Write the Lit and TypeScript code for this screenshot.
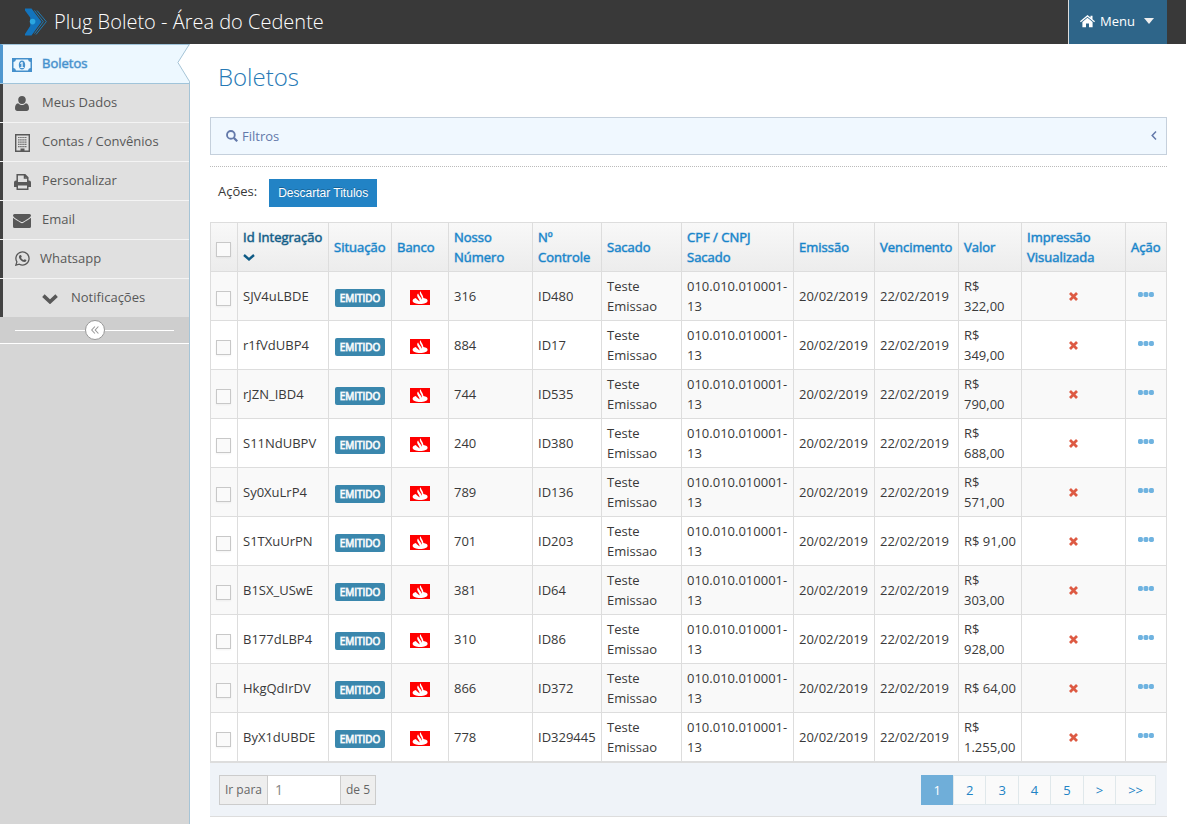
import { LitElement, html, css, svg } from "lit";
import { customElement, property, state } from "lit/decorators.js";

const paths: Record<string, unknown> = {
  money: svg`<svg viewBox="0 0 20 14" width="20" height="14"><path fill="currentColor" fill-rule="evenodd" d="M0 0H20V14H0ZM4 1.5A3 3 0 0 1 1.5 4V10A3 3 0 0 1 4 12.5H16A3 3 0 0 1 18.500 10V4A3 3 0 0 1 16 1.500Z"/><path fill="currentColor" fill-rule="evenodd" d="M10 2.500C12 2.500 13.200 4.500 13.200 7S12 11.500 10 11.500S6.800 9.500 6.800 7S8 2.500 10 2.500ZM9.500 4L8 5.300L8.600 6L9.400 5.600V9H8.300V10H11.800V9H10.700V4Z"/></svg>`,
  user: svg`<svg viewBox="0 0 14 15" width="14" height="15"><path fill="currentColor" d="M7 0C9.300 0 10.800 1.600 10.800 3.900S9.300 8 7 8S3.200 6.200 3.200 3.900S4.700 0 7 0ZM3.200 7.200C4.200 8.400 5.500 9 7 9S9.800 8.400 10.800 7.200C13.200 7.500 14 9.600 14 12.300C14 14 13 15 11.600 15H2.400C1 15 0 14 0 12.300C0 9.600.8 7.500 3.200 7.200Z"/></svg>`,
  building: svg`<svg viewBox="0 0 15 18" width="15" height="18"><path fill="none" stroke="currentColor" stroke-width="1.400" d="M.7.7H14.300V17.300H.7Z"/><path stroke="currentColor" stroke-width="1.200" stroke-dasharray="1.300 .8" d="M3.200 3.500H12M3.200 5.800H12M3.200 8.100H12M3.200 10.400H12M3.200 12.700H12"/><path fill="currentColor" d="M5.500 14.500H9.500V18H5.500Z"/></svg>`,
  print: svg`<svg viewBox="0 0 17 16" width="17" height="16"><path fill="none" stroke="currentColor" stroke-width="1.500" d="M3.200 8V.8H11L13.800 3.500V8M10.500 1V4H13.500"/><path fill="currentColor" fill-rule="evenodd" d="M2 6.500H3.500V8H13.500V6.500H15Q17 6.500 17 8.500V13H14.500V16H2.500V13H0V8.500Q0 6.500 2 6.500ZM4 11.500V14.500H13V11.500Z"/></svg>`,
  mail: svg`<svg viewBox="0 0 18 14" width="18" height="14"><path fill="currentColor" d="M1.500 0H16.500Q18 0 18 1.500C18 3 14.500 5 10.500 7.600Q9 8.600 7.500 7.600C3.500 5 0 3 0 1.500Q0 0 1.500 0ZM0 3.800C2 5.500 5 7 7.200 8.600Q9 9.700 10.800 8.600C13 7 16 5.500 18 3.800V12.500Q18 14 16.500 14H1.500Q0 14 0 12.500Z"/></svg>`,
  whatsapp: svg`<svg viewBox="0 0 16 16" width="15" height="15"><path fill="none" stroke="currentColor" stroke-width="1.400" d="M.9 15.100L2 11.600A7 7 0 1 1 4.600 14.100Z"/><path fill="currentColor" d="M5.600 4.200C6.300 4 6.500 4.300 6.700 4.900L7.200 6.100C7.200 6.500 6.700 6.900 6.400 7.200C7 8.400 8 9.200 9.300 9.700L10.300 8.700L12.200 9.600C12.200 11 11.200 11.800 10 11.700C7 11.300 4.800 9 4.200 6.600C4.200 5.400 4.700 4.600 5.600 4.200Z"/></svg>`,
  chevron: svg`<svg viewBox="0 0 16 10" width="16" height="10"><path fill="none" stroke="currentColor" stroke-width="3.600" d="M1.400 1.600L8 7.800L14.600 1.600"/></svg>`,
  search: svg`<svg viewBox="0 0 13 13" width="12" height="12"><circle cx="5.300" cy="5.300" r="4.200" fill="none" stroke="currentColor" stroke-width="2"/><path stroke="currentColor" stroke-width="2.400" d="M8.500 8.500L12.200 12.200"/></svg>`,
  home: svg`<svg viewBox="0 0 15 13" width="15" height="13"><path fill="currentColor" d="M7.500 2.800L12.600 7V12.200H9V8.500H6V12.200H2.400V7ZM7.500 0L10.500 2.500V.8H12.500V4.200L15 6.300L14.200 7.200L7.500 1.700L.8 7.200L0 6.300Z"/></svg>`,
  left: svg`<svg viewBox="0 0 6 9" width="6" height="9"><path fill="none" stroke="currentColor" stroke-width="1.500" d="M5 .6L1.200 4.500L5 8.400"/></svg>`,
  double: svg`<svg viewBox="0 0 8 8" width="8" height="8"><path fill="none" stroke="currentColor" stroke-width="1.100" d="M3.900.5L.7 4L3.900 7.500M7.400.5L4.200 4L7.400 7.500"/></svg>`,
  sort: svg`<svg viewBox="0 0 12 7" width="12" height="7"><path fill="none" stroke="currentColor" stroke-width="2.400" d="M1 1L6 5.300L11 1"/></svg>`,
  cross: svg`<svg viewBox="0 0 9 9" width="9" height="9"><path fill="none" stroke="currentColor" stroke-width="2.800" d="M1 1L8 8M8 1L1 8"/></svg>`,
  dots: svg`<svg viewBox="0 0 16 5" width="16" height="5"><g fill="currentColor"><rect width="4.900" height="4.900" rx="1.600"/><rect x="5.500" width="4.900" height="4.900" rx="1.600"/><rect x="11" width="4.900" height="4.900" rx="1.600"/></g></svg>`,
  logo: svg`<svg viewBox="0 0 24 28" width="24" height="28"><path fill="#1374bd" d="M1 .5H7.500L17.500 13.700L7.500 27.500H1V26L6.200 18V9.500L1 2.500Z"/><circle cx="8.600" cy="13.600" r="2.800" fill="#2ba7e0"/><path fill="none" stroke="#1c83c4" stroke-width=".9" d="M10.500 2.500L19.300 13.700L10.500 25.500M13 2.500L22.300 13.700L12 26.500"/></svg>`,
  bank: svg`<svg viewBox="0 0 20 15" width="20" height="15"><path fill="#f00" d="M0 0H20V15H0Z"/><path fill="#fff" d="M6 8C6.200 9.300 8.800 10.300 9.600 11.600C10 10 8 8 7.400 6.400C7 5.200 7.300 4 8.100 3.500C8.600 5.300 11.200 7.600 11.700 9.700C12.500 7.800 10.700 5.700 10.100 4.300C9.600 3 9.900 1.800 10.600 1.300C11 3.500 13.400 5.800 13.400 8C16.300 8.400 17.600 9.400 17.600 10.800C17.600 12.800 14.300 14 10.200 14S2.600 12.800 2.600 10.800C2.600 9.500 3.800 8.500 6 8Z"/></svg>`,
};

const icon = (name: string) => paths[name];

interface Boleto {
  id: string;
  numero: string;
  controle: string;
  valor: string;
}

const boletos: Boleto[] = [
  { id: "SJV4uLBDE", numero: "316", controle: "ID480", valor: "322,00" },
  { id: "r1fVdUBP4", numero: "884", controle: "ID17", valor: "349,00" },
  { id: "rJZN_IBD4", numero: "744", controle: "ID535", valor: "790,00" },
  { id: "S11NdUBPV", numero: "240", controle: "ID380", valor: "688,00" },
  { id: "Sy0XuLrP4", numero: "789", controle: "ID136", valor: "571,00" },
  { id: "S1TXuUrPN", numero: "701", controle: "ID203", valor: "91,00" },
  { id: "B1SX_USwE", numero: "381", controle: "ID64", valor: "303,00" },
  { id: "B177dLBP4", numero: "310", controle: "ID86", valor: "928,00" },
  { id: "HkgQdIrDV", numero: "866", controle: "ID372", valor: "64,00" },
  { id: "ByX1dUBDE", numero: "778", controle: "ID329445", valor: "1.255,00" },
];

const linkReset = css`
  * { box-sizing: border-box; }
  a { color: inherit; text-decoration: none; }
  svg { display: block; flex: none; }
`;

@customElement("top-bar")
class TopBar extends LitElement {
  static styles = [linkReset, css`
    :host { display: block; }
    .bar { display: flex; justify-content: space-between; height: 44px; padding: 0 19px 0 24px; background: #393939; color: #fff; }
    .brand { display: flex; align-items: center; gap: 6px; font-size: 20px; font-weight: 300; }
    .menu { display: flex; align-items: center; gap: 5px; padding: 0 13px 2px 11px; border: 0; border-left: 1px solid #ddd; background: #2e6589; color: #fff; font: inherit; cursor: pointer; }
    .caret { margin-left: 4px; border: 5px solid transparent; border-top: 6px solid #eee; border-bottom: 0; }
  `];

  render() {
    return html`<header class="bar">
      <a class="brand" href="#">${icon("logo")}<span>Plug Boleto - Área do Cedente</span></a>
      <button class="menu">${icon("home")}<span>Menu</span><span class="caret"></span></button>
    </header>`;
  }
}

@customElement("side-bar")
class SideBar extends LitElement {
  static styles = [linkReset, css`
    :host { display: block; width: 190px; flex: none; background: #d6d6d6; border-right: 1px solid #a6c4d6; }
    .list { margin: 0; padding: 0; list-style: none; }
    .item { position: relative; border-bottom: 1px solid #f4f4f4; }
    .link { display: flex; align-items: center; height: 38px; padding: 0 8px 2px; border-left: 3px solid #424242; background: #e0e0e0; color: #585858; }
    .glyph { display: flex; justify-content: center; width: 22px; margin-right: 9px; padding-top: 3px; }
    .tight .glyph { margin-right: 7px; padding-top: 0; }
    .nested .glyph { margin: 0 10px 0 28px; }
    .active { border-bottom-color: #a0c4da; }
    .active .link { height: 39px; border-left-color: #4f97cf; border-top: 1px solid #a0c4da; background: #edf8ff; color: #4590cc; }
    .active .text { -webkit-text-stroke: 1px rgba(69, 144, 204, 0.5); }
    .notch { position: absolute; top: 0; right: -1px; }
    .nested { border-bottom: 0; }
    .collapse { display: flex; align-items: center; height: 27px; padding: 0 15px; background: #cecece; border-bottom: 1px solid #fff; }
    .collapse::before, .collapse::after { content: ""; flex: 1; height: 1px; background: #fff; }
    .toggle { display: flex; align-items: center; justify-content: center; width: 20px; height: 20px; padding: 0; border: 1px solid #999; border-radius: 50%; background: #fff; color: #999; cursor: pointer; }
  `];

  render() {
    const items = [
      ["money", "Boletos", "active"],
      ["user", "Meus Dados", ""],
      ["building", "Contas / Convênios", ""],
      ["print", "Personalizar", ""],
      ["mail", "Email", ""],
      ["whatsapp", "Whatsapp", "tight"],
      ["chevron", "Notificações", "nested"],
    ];
    return html`<nav>
      <ul class="list">
        ${items.map(([glyph, label, kind]) => html`<li class="item ${kind}">
          <a class="link" href="#"><span class="glyph">${icon(glyph)}</span><span class="text">${label}</span></a>
          ${kind === "active" ? html`<svg class="notch" width="13" height="39" viewBox="0 0 13 39"><path fill="#fff" d="M13 0L1 19L13 38Z" /><path fill="none" stroke="#a6c4d6" d="M12.500 0L.9 18.500L12.500 37.500" /></svg>` : ""}
        </li>`)}
      </ul>
      <div class="collapse"><button class="toggle" aria-label="Recolher menu">${icon("double")}</button></div>
    </nav>`;
  }
}

@customElement("boleto-table")
class BoletoTable extends LitElement {
  @property({ attribute: false }) rows: Boleto[] = [];

  static styles = [linkReset, css`
    :host { display: block; }
    .table { width: 100%; table-layout: fixed; border-collapse: collapse; line-height: 20px; }
    .table th, .table td { padding: 4px 5px; border: 1px solid #ddd; text-align: left; vertical-align: middle; font-weight: 400; }
    .table td { height: 49px; }
    .head { background: linear-gradient(#f8f8f8, #ececec); color: #1683c9; }
    .head th { height: 49px; -webkit-text-stroke: 1px rgba(22, 131, 201, 0.5); }
    .head .sorted { color: #0e5a85; -webkit-text-stroke-color: rgba(14, 90, 133, 0.5); }
    .arrow { display: block; padding: 7px 0 6px; }
    .body tr:nth-child(odd) { background: #f9f9f9; }
    .c1 { width: 27px; } .c2 { width: 91px; } .c3 { width: 63px; } .c4 { width: 57px; }
    .c5 { width: 84px; } .c6 { width: 69px; } .c7 { width: 80px; } .c8 { width: 112px; }
    .c9 { width: 81px; } .c10 { width: 84px; } .c11 { width: 63px; } .c12 { width: 104px; } .c13 { width: 41px; }
    .check { display: block; appearance: none; width: 15px; height: 15px; margin: 5px 0 0; border: 1px solid #c8c8c8; background: #fafafa; box-shadow: 0 1px 2px rgba(0, 0, 0, 0.05); }
    .check:checked { background: #6faed9; }
    .badge { display: block; width: 50px; height: 18px; margin: 3px 0 0 1px; border-radius: 2px; background: #3a87ad; color: #fff; font-size: 10px; line-height: 18px; text-align: center; -webkit-text-stroke: 1px rgba(255, 255, 255, 0.7); }
    .center { display: flex; justify-content: center; }
    .bank { padding-top: 2px; }
    .cross { padding-top: 1px; color: #dd5a43; }
    .more { width: 100%; padding: 0 0 3px; border: 0; background: none; color: #6fb3e0; cursor: pointer; }
    .nowrap { white-space: nowrap; }
  `];

  render() {
    const heads = ["Situação", "Banco", "Nosso Número", "Nº Controle", "Sacado", "CPF / CNPJ Sacado", "Emissão", "Vencimento", "Valor", "Impressão Visualizada", "Ação"];
    return html`<table class="table">
      <colgroup>${Array.from({ length: 13 }, (_, i) => html`<col class="c${i + 1}" />`)}</colgroup>
      <thead class="head">
        <tr>
          <th><input class="check" type="checkbox" aria-label="Selecionar todos" /></th>
          <th class="sorted"><a class="nowrap" href="#">Id Integração</a><span class="arrow">${icon("sort")}</span></th>
          ${heads.map((h) => html`<th>${h}</th>`)}
        </tr>
      </thead>
      <tbody class="body">
        ${this.rows.map((r) => html`<tr>
          <td><input class="check" type="checkbox" aria-label="Selecionar ${r.id}" /></td>
          <td>${r.id}</td>
          <td><span class="badge">EMITIDO</span></td>
          <td><span class="center bank">${icon("bank")}</span></td>
          <td>${r.numero}</td>
          <td class="nowrap">${r.controle}</td>
          <td>Teste Emissao</td>
          <td>010.010.010001-13</td>
          <td class="nowrap">20/02/2019</td>
          <td class="nowrap">22/02/2019</td>
          <td>R$ ${r.valor}</td>
          <td><span class="center cross">${icon("cross")}</span></td>
          <td><button class="more center" aria-label="Ações de ${r.id}">${icon("dots")}</button></td>
        </tr>`)}
      </tbody>
    </table>`;
  }
}

@customElement("page-nav")
class PageNav extends LitElement {
  @state() page = "1";

  static styles = [linkReset, css`
    :host { display: flex; justify-content: space-between; align-items: center; height: 55px; padding: 0 11px 0 9px; background: #eff3f8; border-top: 1px solid #ddd; border-bottom: 1px solid #ddd; }
    .jump { display: flex; height: 30px; font-size: 12px; color: #666; }
    .addon { display: flex; align-items: center; padding: 0 5px; border: 1px solid #ccc; background: #eee; }
    .number { width: 72px; min-width: 0; padding: 0 7px; border: 1px solid #d5d5d5; border-width: 1px 0; border-radius: 0; background: #fff; color: #858585; font: inherit; font-size: 14px; outline: 0; }
    .pages { display: flex; height: 30px; margin: 0; padding: 0; list-style: none; }
    .page { display: flex; align-items: center; justify-content: center; min-width: 33px; height: 30px; padding: 0 12px; margin-left: -1px; border: 1px solid #e0e8eb; background: #fafafa; color: #2283c5; }
    .current { background: #6faed9; border-color: #6faed9; color: #fff; }
  `];

  render() {
    return html`
      <div class="jump">
        <label class="addon" for="pagina">Ir para</label>
        <input class="number" id="pagina" type="text" .value=${this.page} />
        <span class="addon">de 5</span>
      </div>
      <ul class="pages">
        ${["1", "2", "3", "4", "5", ">", ">>"].map((p) => html`<li><a href="#" class="page ${p === this.page ? "current" : ""}">${p}</a></li>`)}
      </ul>`;
  }
}

@customElement("app-root")
class AppRoot extends LitElement {
  static styles = [linkReset, css`
    :host { display: flex; flex-direction: column; min-height: 100vh; background: #fff; color: #393939; font: 13px/20px "Open Sans", sans-serif; }
    .layout { display: flex; flex: 1; }
    .main { flex: 1; min-width: 0; padding: 0 19px 7px 20px; }
    .title { margin: 0; padding: 16px 8px 24px; color: #2679b5; font-size: 24px; font-weight: 300; line-height: 33px; }
    .filters { display: flex; align-items: center; gap: 4px; width: 100%; height: 38px; padding: 0 9px 0 15px; border: 1px solid #c5d0dc; background: #f0f8ff; color: #6379aa; font: inherit; cursor: pointer; }
    .fold { margin-left: auto; padding-bottom: 2px; }
    .actions { display: flex; align-items: flex-start; gap: 12px; margin-top: 11px; padding: 12px 8px 15px; border-top: 1px dotted #bbb; line-height: 24px; }
    .discard { height: 28px; padding: 0 9px; border: 0; background: #2283c5; color: #fff; font: 12px "Liberation Sans", Arial, sans-serif; text-shadow: 0 -1px 0 rgba(0, 0, 0, 0.25); cursor: pointer; }
  `];

  render() {
    return html`
      <top-bar></top-bar>
      <div class="layout">
        <side-bar></side-bar>
        <main class="main">
          <h1 class="title">Boletos</h1>
          <button class="filters">${icon("search")}<span>Filtros</span><span class="fold">${icon("left")}</span></button>
          <div class="actions"><span>Ações:</span><button class="discard">Descartar Titulos</button></div>
          <boleto-table .rows=${boletos}></boleto-table>
          <page-nav></page-nav>
        </main>
      </div>`;
  }
}
